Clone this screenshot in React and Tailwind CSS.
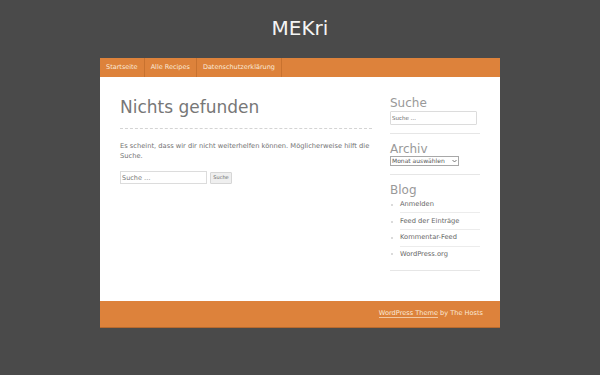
export default function App() {
  const items = ["Anmelden", "Feed der Einträge", "Kommentar-Feed", "WordPress.org"];
  return (
    <div className="min-h-[375px] w-[600px] bg-[#4a4a4a]" style={{ fontFamily: '"DejaVu Sans", Verdana, sans-serif' }}>
      <header className="h-[58px] pt-[16px] text-center">
        <div className="text-[20px] leading-[24px] text-[#f4f4f4]">MEKri</div>
      </header>
      <div className="mx-auto w-[400px]">
        <nav className="flex h-[19px] bg-[#dd823b] text-[6.5px] text-[#fbe9d7]">
          {["Startseite", "Alle Recipes", "Datenschutzerklärung"].map((t) => (
            <div key={t} className="flex items-center border-r border-[#c8722f] px-[6px]">{t}</div>
          ))}
        </nav>
        <div className="flex bg-white px-[20px] pt-[20px] pb-[30px] leading-none">
          <main className="w-[252px]">
            <h1 className="border-b border-dashed border-[#d4d4d4] pb-[11px] text-[17px] leading-[20px] text-[#777]">Nichts gefunden</h1>
            <p className="mt-[12px] text-[6.7px] leading-[10px] text-[#727272]">
              Es scheint, dass wir dir nicht weiterhelfen können. Möglicherweise hilft die Suche.
            </p>
            <form className="mt-[10px] flex items-center gap-[3px]">
              <input
                placeholder="Suche …"
                className="block h-[13px] w-[87px] border border-[#dcdcdc] px-[1px] text-[6.5px] text-[#555] outline-none placeholder:text-[#777]"
              />
              <button type="button" className="flex h-[12px] w-[22px] items-center justify-center rounded-[1px] border border-[#d6d6d6] bg-[#efefef] text-[5px] text-[#666]">
                Suche
              </button>
            </form>
          </main>
          <aside className="ml-[18px] w-[90px]">
            <section className="border-b border-[#e6e6e6] pb-[8px]">
              <h2 className="text-[12px] leading-[12px] text-[#999]">Suche</h2>
              <input
                placeholder="Suche …"
                className="mt-[1.5px] block h-[14px] w-[87px] rounded-[1px] border border-[#dcdcdc] px-[1px] text-[5.5px] text-[#555] outline-none placeholder:text-[#666]"
              />
            </section>
            <section className="mt-[9px] border-b border-[#e6e6e6] pb-[8px]">
              <h2 className="text-[12px] leading-[12px] text-[#999]">Archiv</h2>
              <div className="mt-[1px] flex h-[10px] w-[69px] items-center justify-between border border-[#a8a8a8] px-[1px] text-[6px] leading-[8px] text-[#555]">
                <span>Monat auswählen</span>
                <svg width="5" height="4" viewBox="0 0 5 4">
                  <path d="M0.5 1 L2.5 3 L4.5 1" fill="none" stroke="#555" strokeWidth="0.8" />
                </svg>
              </div>
            </section>
            <section className="mt-[9px] border-b border-[#e6e6e6] pb-[8px]">
              <h2 className="text-[12px] leading-[12px] text-[#999]">Blog</h2>
              <ul className="mt-[1px]">
                {items.map((t, i) => (
                  <li key={t} className="flex items-center">
                    <span className="mr-[7px] ml-[1px] h-[2px] w-[2px] rounded-full bg-[#cfcfcf]" />
                    <span
                      className={
                        "flex flex-1 items-center text-[6.7px] text-[#666] " +
                        (i < items.length - 1 ? "h-[16.7px] border-b border-[#ececec]" : "h-[15.7px]")
                      }
                    >
                      {t}
                    </span>
                  </li>
                ))}
              </ul>
            </section>
          </aside>
        </div>
        <footer className="flex h-[27px] items-center justify-end border-b border-[#b86a2e] bg-[#dd823b] pr-[17px] text-[6.6px] text-[#fbe9d7]">
          <span className="border-b border-[#f3c9a2] leading-[7px]">WordPress Theme</span>
          <span className="ml-[2px]">by The Hosts</span>
        </footer>
      </div>
    </div>
  );
}
